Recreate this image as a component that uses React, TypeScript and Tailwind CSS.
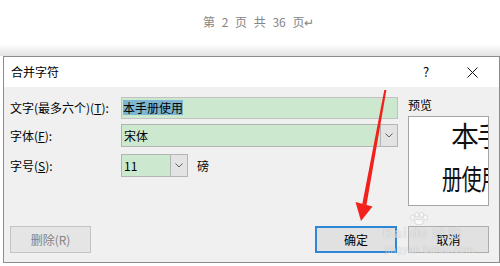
import React from "react";

const font = "font-['Noto_Sans_CJK_SC','Liberation_Sans',sans-serif]";

function Chevron() {
  return (
    <svg width="8" height="5" viewBox="0 0 8 5">
      <polyline points="0.5,0.5 4,4 7.5,0.5" fill="none" stroke="#606060" strokeWidth="1" />
    </svg>
  );
}

function Combo({ value, width }: { value: string; width?: string }) {
  return (
    <div className={`flex h-full border border-[#b4b4b4] ${width ?? "flex-1"}`}>
      <div className="flex flex-1 items-center bg-[#cce8cf] pl-[2px] text-[12px] text-black">{value}</div>
      <div className="flex w-[17px] items-center justify-center border-l border-[#b4b4b4] bg-[#e3e3e3]">
        <Chevron />
      </div>
    </div>
  );
}

export default function App() {
  return (
    <div className={`relative h-[266px] w-[500px] overflow-hidden bg-white ${font}`}>
      {/* page footer behind the dialog */}
      <div className="flex h-[44px] items-center pl-[203px] text-[12px] text-[#858585] [word-spacing:4px]">
        第 2 页 共 36 页<span className="[word-spacing:0]">↵</span>
      </div>
      <div className="h-[12px] bg-gradient-to-b from-white to-[#e2e2e2]" />

      {/* dialog */}
      <div className="ml-[3px] w-[497px] border border-[#8c8c8c] bg-[#f0f0f0]">
        <div className="flex h-[30px] items-center bg-white pl-[7px] pr-[4px]">
          <span className="flex-1 text-[12px] text-black">合并字符</span>
          <div className="flex w-[46px] justify-center text-[13px] text-black">?</div>
          <div className="flex w-[46px] justify-center">
            <svg width="11" height="11" viewBox="0 0 11 11">
              <path d="M0.5 0.5 L10.5 10.5 M10.5 0.5 L0.5 10.5" stroke="#111" strokeWidth="1" />
            </svg>
          </div>
        </div>

        <div className="flex h-[175px] flex-col">
          <div className="flex pl-[6px] pt-[9px]">
            <div className="flex w-[388px] flex-col text-[12px] text-black">
              <div className="flex h-[23px] items-center">
                <span className="w-[111px]">
                  文字(最多六个)(<span className="underline">T</span>):
                </span>
                <div className="flex h-[22px] flex-1 items-center border border-[#c2c2c2] bg-[#cce8cf] pl-[1px]">
                  <span className="inline-block h-[15px] bg-[#7db6d3] leading-[15px]">本手册使用</span>
                </div>
              </div>
              <div className="mt-[5px] flex h-[23px] items-center">
                <span className="w-[111px]">
                  字体(<span className="underline">F</span>):
                </span>
                <Combo value="宋体" />
              </div>
              <div className="mt-[7px] flex h-[23px] items-center">
                <span className="w-[111px]">
                  字号(<span className="underline">S</span>):
                </span>
                <Combo value="11" width="w-[67px]" />
                <span className="ml-[9px]">磅</span>
              </div>
            </div>

            <div className="ml-[10px] flex w-[81px] flex-col">
              <div className="h-[17px] text-[12px] leading-[17px] text-black">预览</div>
              <div className="mt-[3px] h-[90px] overflow-hidden whitespace-nowrap border border-[#a5a5a5] bg-white text-[28px] leading-[28px] text-[#111]">
                <div className="mt-[4px] pl-[42px] tracking-[-2px]">本手</div>
                <div className="mt-[15px] pl-[33px]">
                  <span className="inline-block origin-left scale-x-[0.72] tracking-[-1px]">册使用</span>
                </div>
              </div>
            </div>
          </div>

          <div className="mb-[9px] mt-auto flex items-center text-[12px]">
            <div className="ml-[6px] flex h-[27px] w-[81px] items-center justify-center border border-[#c3c3c3] bg-[#e5e5e5] text-[#838383]">
              删除(R)
            </div>
            <div className="flex-1" />
            <div className="flex h-[27px] w-[82px] items-center justify-center border-2 border-[#2f86d6] bg-[#e1e1e1] text-black">
              确定
            </div>
            <div className="ml-[11px] mr-[10px] flex h-[27px] w-[81px] items-center justify-center border border-[#adadad] bg-[#e1e1e1] text-black">
              取消
            </div>
          </div>
        </div>
      </div>

      {/* red arrow annotation */}
      <svg className="pointer-events-none absolute left-0 top-0" width="500" height="266" viewBox="0 0 500 266">
        <polygon points="384.3,90 386.4,90 366.5,205 362.2,204.5" fill="#f2211c" />
        <polygon points="355.5,202 372.5,206.5 361,221" fill="#f2211c" />
      </svg>

      {/* baidu watermark */}
      <div className="pointer-events-none absolute left-[383px] top-[212px] flex flex-col text-white/60 [text-shadow:0_0_1px_rgba(0,0,0,0.22)]">
        <div className="flex items-end">
          <span className="font-['Liberation_Sans',sans-serif] text-[14px] font-bold leading-[14px] tracking-[1px]">Bai</span>
          <div className="ml-[1px] flex flex-col items-center">
            <svg width="20" height="13" viewBox="0 0 20 13" className="mb-[1px] opacity-60">
              <g fill="#ffffff" stroke="#b0b0b0" strokeWidth="0.6">
                <ellipse cx="3.5" cy="5.5" rx="2" ry="2.6" />
                <ellipse cx="8" cy="2.8" rx="2" ry="2.5" />
                <ellipse cx="12.5" cy="2.8" rx="2" ry="2.5" />
                <ellipse cx="16.5" cy="5.5" rx="2" ry="2.6" />
                <ellipse cx="10" cy="10" rx="4.2" ry="2.7" />
              </g>
            </svg>
            <span className="font-['Liberation_Sans',sans-serif] text-[14px] font-bold leading-[14px]">du</span>
          </div>
          <span className="ml-[3px] text-[14px] leading-[15px] tracking-[2px]">经验</span>
        </div>
        <span className="mt-[5px] pl-[2px] font-['Liberation_Sans',sans-serif] text-[10px] leading-[10px] tracking-[0.5px]">jingyan.baidu.com</span>
      </div>
    </div>
  );
}
